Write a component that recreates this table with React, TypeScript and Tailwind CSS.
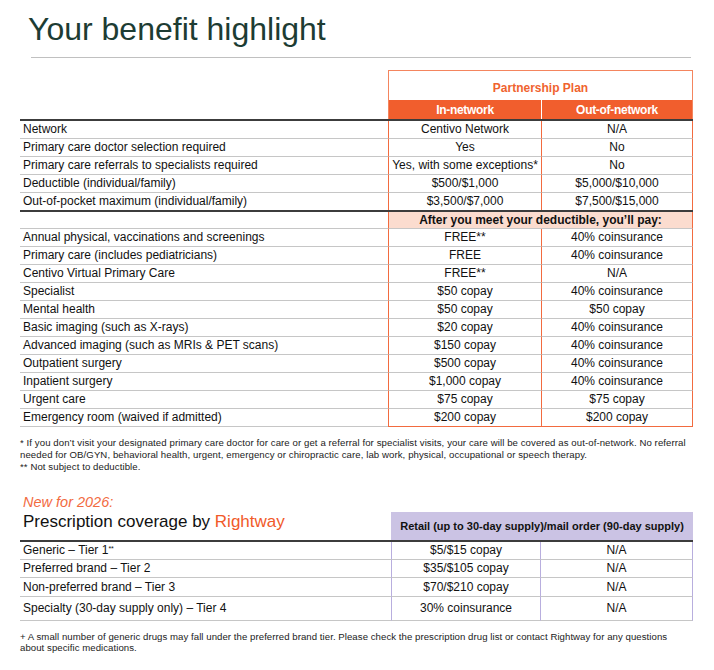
const networkRows = [
  { label: 'Network', a: 'Centivo Network', b: 'N/A' },
  { label: 'Primary care doctor selection required', a: 'Yes', b: 'No' },
  { label: 'Primary care referrals to specialists required', a: 'Yes, with some exceptions*', b: 'No' },
  { label: 'Deductible (individual/family)', a: '$500/$1,000', b: '$5,000/$10,000' },
  { label: 'Out-of-pocket maximum (individual/family)', a: '$3,500/$7,000', b: '$7,500/$15,000' },
]

const serviceRows = [
  { label: 'Annual physical, vaccinations and screenings', a: 'FREE**', b: '40% coinsurance' },
  { label: 'Primary care (includes pediatricians)', a: 'FREE', b: '40% coinsurance' },
  { label: 'Centivo Virtual Primary Care', a: 'FREE**', b: 'N/A' },
  { label: 'Specialist', a: '$50 copay', b: '40% coinsurance' },
  { label: 'Mental health', a: '$50 copay', b: '$50 copay' },
  { label: 'Basic imaging (such as X-rays)', a: '$20 copay', b: '40% coinsurance' },
  { label: 'Advanced imaging (such as MRIs & PET scans)', a: '$150 copay', b: '40% coinsurance' },
  { label: 'Outpatient surgery', a: '$500 copay', b: '40% coinsurance' },
  { label: 'Inpatient surgery', a: '$1,000 copay', b: '40% coinsurance' },
  { label: 'Urgent care', a: '$75 copay', b: '$75 copay' },
  { label: 'Emergency room (waived if admitted)', a: '$200 copay', b: '$200 copay' },
]

const rxRows = [
  { label: 'Preferred brand – Tier 2', a: '$35/$105 copay', h: 'h-[18px]' },
  { label: 'Non-preferred brand – Tier 3', a: '$70/$210 copay', h: 'h-[19px]' },
  { label: 'Specialty (30-day supply only) – Tier 4', a: '30% coinsurance', h: 'h-[24px]' },
]

function PlanRow({ label, a, b, last = false, noBottom = false }: { label: string; a: string; b: string; last?: boolean; noBottom?: boolean }) {
  return (
    <div className={`flex text-[12px] leading-[17px] ${noBottom ? 'h-[17px]' : 'h-[18px]'}`}>
      <div className={`w-[368px] pl-[3px] flex items-center border-[#c6c6c6] ${noBottom ? '' : 'border-b'}`}>{label}</div>
      <div
        className={`w-[153px] flex items-center justify-center border-l border-l-[#f26b3f] ${noBottom ? '' : 'border-b'} ${last ? 'border-b-[#f26b3f]' : 'border-b-[#c6c6c6]'}`}
      >
        {a}
      </div>
      <div
        className={`w-[152px] flex items-center justify-center border-x border-x-[#f26b3f] ${noBottom ? '' : 'border-b'} ${last ? 'border-b-[#f26b3f]' : 'border-b-[#c6c6c6]'}`}
      >
        {b}
      </div>
    </div>
  )
}

function RxRow({ label, a, h }: { label: React.ReactNode; a: string; h: string }) {
  return (
    <div className={`flex text-[12px] leading-[17px] ${h}`}>
      <div className="w-[371px] pl-[3px] flex items-center border-b border-[#c6c6c6]">{label}</div>
      <div className="w-[149px] flex items-center justify-center border-l border-l-[#b8aede] border-b border-b-[#c6c6c6]">{a}</div>
      <div className="w-[153px] flex items-center justify-center border-x border-x-[#b8aede] border-b border-b-[#c6c6c6]">N/A</div>
    </div>
  )
}

export default function App() {
  return (
    <div className="w-[714px] h-[670px] bg-white text-[#111] font-['Liberation_Sans',Arial,sans-serif] overflow-hidden">
      {/* Title */}
      <h1 className="mt-[14px] pl-[28px] text-[32px] leading-[30px] text-[#1d3c33]">Your benefit highlight</h1>
      <div className="mt-[13px] ml-[31px] w-[660px] h-px bg-[#c0c0c0]" />

      {/* Benefit table */}
      <div className="mt-[12px] ml-[20px] w-[673px]">
        <div className="flex">
          <div className="w-[368px]" />
          <div className="w-[305px] border-t border-[#f4855e]">
            <div className="h-[29px] flex items-center justify-center pt-[4px] border-x border-[#f4855e] text-[12px] font-bold text-[#f0632f]">
              Partnership Plan
            </div>
            <div className="flex h-[19px] bg-[#f15e2d] text-white text-[12px] font-bold tracking-[-0.3px]">
              <div className="w-[153px] flex items-center justify-center border-l border-[#f4855e]">In-network</div>
              <div className="w-[152px] flex items-center justify-center border-l border-l-white border-r border-r-[#f4855e]">Out-of-network</div>
            </div>
          </div>
        </div>
        <div className="h-[2px] bg-[#3c3c3c]" />
        {networkRows.map((r, i) => (
          <PlanRow key={r.label} {...r} noBottom={i === networkRows.length - 1} />
        ))}
        <div className="h-[2px] bg-[#3c3c3c]" />
        <div className="flex h-[17px] text-[12px] leading-[17px]">
          <div className="w-[368px] border-b border-[#c6c6c6]" />
          <div className="w-[305px] flex items-center justify-center bg-[#fbdccf] font-bold border-x border-x-[#f26b3f] border-b border-b-[#c6c6c6]">
            After you meet your deductible, you’ll pay:
          </div>
        </div>
        {serviceRows.map((r, i) => (
          <PlanRow key={r.label} {...r} last={i === serviceRows.length - 1} />
        ))}
      </div>

      {/* Footnotes */}
      <div className="mt-[10px] ml-[20px] text-[9.6px] tracking-[0.09px] leading-[12px] text-[#222] whitespace-nowrap">
        <p>
          * If you don’t visit your designated primary care doctor for care or get a referral for specialist visits, your care will be covered as out-of-network. No referral
        </p>
        <p>needed for OB/GYN, behavioral health, urgent, emergency or chiropractic care, lab work, physical, occupational or speech therapy.</p>
        <p>** Not subject to deductible.</p>
      </div>

      {/* Prescription */}
      <p className="mt-[21px] ml-[23px] text-[14.5px] leading-[16px] italic text-[#f26b3f]">New for 2026:</p>
      <div className="mt-[2px] ml-[20px] w-[673px]">
        <div className="flex h-[28px]">
          <div className="w-[371px] pl-[3px] text-[17px] leading-[20px]">
            Prescription coverage by <span className="text-[#f15a29]">Rightway</span>
          </div>
          <div className="w-[302px] flex items-center justify-center bg-[#cbc3e4] text-[11px] font-bold">
            Retail (up to 30-day supply)/mail order (90-day supply)
          </div>
        </div>
        <div className="h-[2px] bg-[#3c3c3c]" />
        <RxRow
          label={
            <span>
              Generic – Tier 1<sup className="text-[7px]">**</sup>
            </span>
          }
          a="$5/$15 copay"
          h="h-[18px]"
        />
        {rxRows.map((r) => (
          <RxRow key={r.label} {...r} />
        ))}
      </div>

      <div className="mt-[10px] ml-[20px] text-[9.6px] tracking-[0.06px] leading-[11px] text-[#222] whitespace-nowrap">
        <p>+ A small number of generic drugs may fall under the preferred brand tier. Please check the prescription drug list or contact Rightway for any questions</p>
        <p>about specific medications.</p>
      </div>
    </div>
  )
}
